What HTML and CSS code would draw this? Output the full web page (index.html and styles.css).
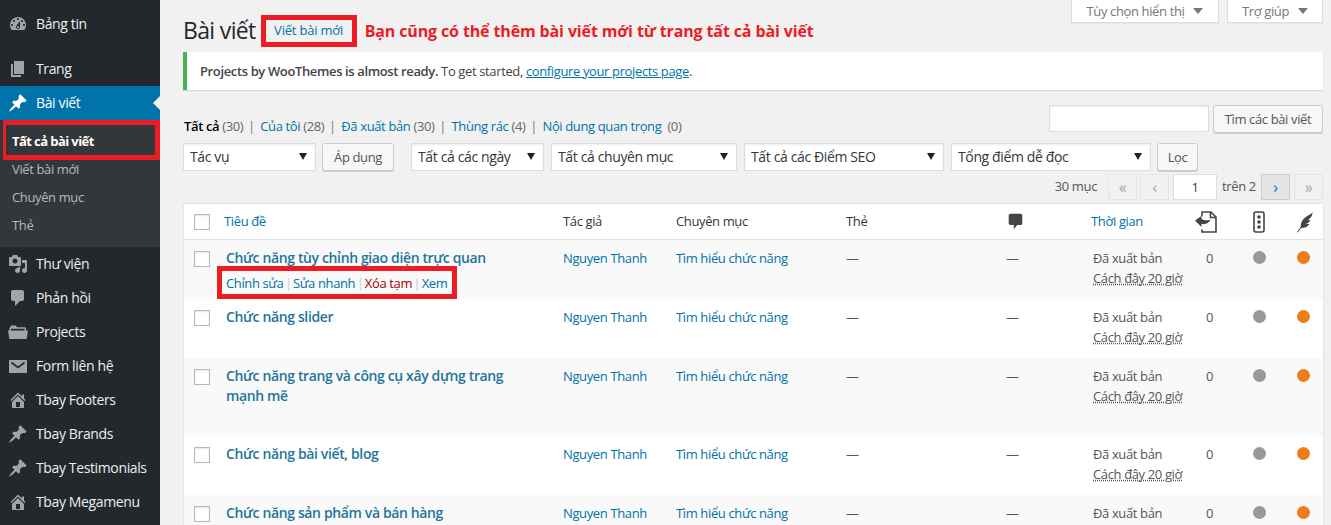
FILE: index.html
```html
<!DOCTYPE html>
<html lang="vi">
<head>
    <meta charset="UTF-8">
    <meta name="viewport" content="width=device-width, initial-scale=1.0">
    <title>Bài viết</title>
    <link rel="stylesheet" href="styles.css">
</head>
<body>
    <div class="wrap">
        <nav class="sidebar">
            <a class="menu-item menu-first" href="#">
                <svg class="menu-icon" viewBox="0 0 20 20"><path d="M3.76 16h12.48c1.1-1.37 1.76-3.11 1.76-5 0-4.42-3.58-8-8-8s-8 3.58-8 8c0 1.89.66 3.63 1.76 5zM10 4c.55 0 1 .45 1 1s-.45 1-1 1-1-.45-1-1 .45-1 1-1zM6 6c.55 0 1 .45 1 1s-.45 1-1 1-1-.45-1-1 .45-1 1-1zm8 0c.55 0 1 .45 1 1s-.45 1-1 1-1-.45-1-1 .45-1 1-1zm-5.37 5.55L12 7v6c0 1.1-.9 2-2 2s-2-.9-2-2c0-.57.24-1.08.63-1.45zM4 10c.55 0 1 .45 1 1s-.45 1-1 1-1-.45-1-1 .45-1 1-1zm12 0c.55 0 1 .45 1 1s-.45 1-1 1-1-.45-1-1 .45-1 1-1zm-5 3c0-.55-.45-1-1-1s-1 .45-1 1 .45 1 1 1 1-.45 1-1z"/></svg>
                Bảng tin
            </a>
            <a class="menu-item menu-sep" href="#">
                <svg class="menu-icon" viewBox="0 0 20 20"><path d="M6 15V2h10v13H6zm-1 1h8v2H3V5h2v11z"/></svg>
                Trang
            </a>
            <a class="menu-item active" href="#">
                <svg class="menu-icon" viewBox="0 0 20 20"><path d="M10.44 3.02l1.82-1.82 6.36 6.35-1.83 1.82c-1.05-.68-2.48-.57-3.41.36l-.75.75c-.92.93-1.04 2.35-.35 3.41l-1.83 1.82-2.41-2.41-2.8 2.79c-.42.42-3.38 2.71-3.8 2.29s1.86-3.39 2.28-3.81l2.79-2.79L4.1 9.36l1.83-1.82c1.05.69 2.48.57 3.4-.36l.75-.75c.93-.92 1.05-2.35.36-3.41z"/></svg>
                Bài viết
            </a>
            <div class="submenu">
                <a class="sub-item current" href="#">Tất cả bài viết</a>
                <a class="sub-item" href="#">Viết bài mới</a>
                <a class="sub-item" href="#">Chuyên mục</a>
                <a class="sub-item" href="#">Thẻ</a>
            </div>
            <a class="menu-item" href="#">
                <svg class="menu-icon" viewBox="0 0 20 20"><path d="M13 11V4c0-.55-.45-1-1-1h-1.67L9 1H5L3.67 3H2c-.55 0-1 .45-1 1v7c0 .55.45 1 1 1h10c.55 0 1-.45 1-1zM7 4.5c1.38 0 2.5 1.12 2.5 2.5S8.38 9.5 7 9.5 4.5 8.38 4.5 7 5.62 4.5 7 4.5zM14 6h5v10.5c0 1.38-1.12 2.5-2.5 2.5S14 17.88 14 16.5s1.12-2.5 2.5-2.5c.17 0 .34.02.5.05V9h-3V6zm-4 8.05V13h2v3.5c0 1.38-1.12 2.5-2.5 2.5S7 17.88 7 16.5 8.12 14 9.5 14c.17 0 .34.02.5.05z"/></svg>
                Thư viện
            </a>
            <a class="menu-item" href="#">
                <svg class="menu-icon" viewBox="0 0 20 20"><path d="M5 2h9c1.1 0 2 .9 2 2v7c0 1.1-.9 2-2 2h-2l-5 5v-5H5c-1.1 0-2-.9-2-2V4c0-1.1.9-2 2-2z"/></svg>
                Phản hồi
            </a>
            <a class="menu-item" href="#">
                <svg class="menu-icon" viewBox="0 0 20 20"><path d="M0 8.500h1.500V6c0-.5.4-.8.8-.8L3 3.500h5l1 1.700h8.200c.5 0 .8.3.8.8v2.500h2l-1.300 8.500H1.300z M3 8.500h13.500V6.700H3z"/></svg>
                Projects
            </a>
            <a class="menu-item" href="#">
                <svg class="menu-icon" viewBox="0 0 20 20"><rect x="1" y="4" width="18" height="13" rx=".5"/><path class="envelope-fold" d="M3.500 6.500l6.500 5 6.500-5"/></svg>
                Form liên hệ
            </a>
            <a class="menu-item" href="#">
                <svg class="menu-icon" viewBox="0 0 20 20"><path d="M16 8.500l1.530 1.530-1.060 1.060L10 4.620l-6.470 6.470-1.060-1.060L10 2.500l4 4v-2h2v4zm-6-2.460l6 5.990V18H4v-5.970zM12 17v-5H8v5h4z"/></svg>
                Tbay Footers
            </a>
            <a class="menu-item" href="#">
                <svg class="menu-icon" viewBox="0 0 20 20"><path d="M10.44 3.02l1.82-1.82 6.36 6.35-1.83 1.82c-1.05-.68-2.48-.57-3.41.36l-.75.75c-.92.93-1.04 2.35-.35 3.41l-1.83 1.82-2.41-2.41-2.8 2.79c-.42.42-3.38 2.71-3.8 2.29s1.86-3.39 2.28-3.81l2.79-2.79L4.1 9.36l1.83-1.82c1.05.69 2.48.57 3.4-.36l.75-.75c.93-.92 1.05-2.35.36-3.41z"/></svg>
                Tbay Brands
            </a>
            <a class="menu-item" href="#">
                <svg class="menu-icon" viewBox="0 0 20 20"><path d="M10.44 3.02l1.82-1.82 6.36 6.35-1.83 1.82c-1.05-.68-2.48-.57-3.41.36l-.75.75c-.92.93-1.04 2.35-.35 3.41l-1.83 1.82-2.41-2.41-2.8 2.79c-.42.42-3.38 2.71-3.8 2.29s1.86-3.39 2.28-3.81l2.79-2.79L4.1 9.36l1.83-1.82c1.05.69 2.48.57 3.4-.36l.75-.75c.93-.92 1.05-2.35.36-3.41z"/></svg>
                Tbay Testimonials
            </a>
            <a class="menu-item" href="#">
                <svg class="menu-icon" viewBox="0 0 20 20"><path d="M16 8.500l1.530 1.530-1.060 1.060L10 4.620l-6.470 6.470-1.060-1.060L10 2.500l4 4v-2h2v4zm-6-2.460l6 5.990V18H4v-5.970zM12 17v-5H8v5h4z"/></svg>
                Tbay Megamenu
            </a>
        </nav>

        <main class="content">
            <div class="top-row">
                <h1 class="page-title">Bài viết</h1>
                <a class="add-new" href="#">Viết bài mới</a>
                <span class="note">Bạn cũng có thể thêm bài viết mới từ trang tất cả bài viết</span>
                <div class="screen-tabs">
                    <button class="screen-tab tab-options">Tùy chọn hiển thị <i class="tab-arrow"></i></button>
                    <button class="screen-tab tab-help">Trợ giúp <i class="tab-arrow"></i></button>
                </div>
            </div>

            <div class="notice">
                <strong>Projects by WooThemes is almost ready.</strong> To get started, <a href="#">configure your projects page</a>.
            </div>

            <div class="search-row">
                <ul class="subsub">
                    <li><a class="current" href="#">Tất cả</a> (30)</li>
                    <li><a href="#">Của tôi</a> (28)</li>
                    <li><a href="#">Đã xuất bản</a> (30)</li>
                    <li><a href="#">Thùng rác</a> (4)</li>
                    <li><a href="#">Nội dung quan trọng</a> &nbsp;(0)</li>
                </ul>
                <div class="search-box">
                    <input class="search-input" type="search">
                    <button class="btn btn-search">Tìm các bài viết</button>
                </div>
            </div>

            <div class="filter-row">
                <label class="select sel-action"><select><option>Tác vụ</option></select></label>
                <button class="btn btn-apply">Áp dụng</button>
                <label class="select sel-date"><select><option>Tất cả các ngày</option></select></label>
                <label class="select sel-cat"><select><option>Tất cả chuyên mục</option></select></label>
                <label class="select sel-seo"><select><option>Tất cả các Điểm SEO</option></select></label>
                <label class="select sel-read"><select><option>Tổng điểm dễ đọc</option></select></label>
                <button class="btn btn-filter">Lọc</button>
            </div>

            <div class="pager">
                <span class="pager-count">30 mục</span>
                <span class="page-btn">«</span>
                <span class="page-btn">‹</span>
                <input class="page-input" type="text" value="1">
                <span class="pager-total">trên 2</span>
                <a class="page-btn page-next" href="#">›</a>
                <span class="page-btn">»</span>
            </div>

            <table class="posts">
                <colgroup>
                    <col class="c-cb"><col class="c-title"><col class="c-author"><col class="c-cat"><col class="c-tags">
                    <col class="c-comments"><col class="c-date"><col class="c-links"><col class="c-seo"><col class="c-read">
                </colgroup>
                <thead>
                    <tr>
                        <th class="cell-cb"><span class="checkbox"></span></th>
                        <th class="th-title"><a href="#">Tiêu đề</a></th>
                        <th>Tác giả</th>
                        <th>Chuyên mục</th>
                        <th>Thẻ</th>
                        <th class="th-icon-left">
                            <svg class="head-icon" viewBox="0 0 20 20"><path d="M4 1h12c1.100 0 2 .9 2 2v9c0 1.100-.9 2-2 2h-4l-4 5v-5H4c-1.100 0-2-.9-2-2V3c0-1.100.9-2 2-2z"/></svg>
                        </th>
                        <th class="th-date"><a href="#">Thời gian</a></th>
                        <th class="th-center th-links">
                            <svg class="head-icon wide" viewBox="0 0 22 22"><path class="outline" d="M7 5.500V1h9l5 5v15H7v-2.500M15.500 1v5.500H21"/><path d="M0 9.500l6.500-4.500v2.800c2 1.600 5.500 2.200 9 .7-1.500 3.500-5.500 5.500-9 4.300V16z"/></svg>
                        </th>
                        <th class="th-center">
                            <svg class="head-icon wide" viewBox="0 0 22 22"><rect class="outline" x="6" y="1" width="10" height="20" rx="2"/><circle cx="11" cy="6" r="1.800"/><circle cx="11" cy="11" r="1.800"/><circle cx="11" cy="16" r="1.800"/></svg>
                        </th>
                        <th class="th-center th-read">
                            <svg class="head-icon wide" viewBox="0 0 22 22"><path d="M19.500 1c-.8 2-3 2.500-6 4.500-3.200 2.100-5.500 5-5.700 8.500l-.1 2L4 21l.6.500 3.700-4.500c3.500.2 6.700-1.200 8.200-4.200-1.300.4-2.500.4-3.500.1 1.800-.6 3.600-2 4.400-3.900-.9.2-1.800.2-2.600 0 2.200-1.200 4.900-3.900 4.700-8z"/></svg>
                        </th>
                    </tr>
                </thead>
                <tbody>
                    <tr class="alt">
                        <td class="cell-cb"><span class="checkbox"></span></td>
                        <td>
                            <a class="row-title" href="#">Chức năng tùy chỉnh giao diện trực quan</a>
                            <div class="row-actions shown">
                                <a href="#">Chỉnh sửa</a> <i>|</i> <a href="#">Sửa nhanh</a> <i>|</i> <a class="trash" href="#">Xóa tạm</a> <i>|</i> <a href="#">Xem</a>
                            </div>
                        </td>
                        <td><a href="#">Nguyen Thanh</a></td>
                        <td><a href="#">Tìm hiểu chức năng</a></td>
                        <td>—</td>
                        <td>—</td>
                        <td class="td-date">Đã xuất bản<br><abbr>Cách đây 20 giờ</abbr></td>
                        <td class="td-count">0</td>
                        <td class="td-dot"><span class="dot gray"></span></td>
                        <td class="td-dot td-read"><span class="dot orange"></span></td>
                    </tr>
                    <tr>
                        <td class="cell-cb"><span class="checkbox"></span></td>
                        <td>
                            <a class="row-title" href="#">Chức năng slider</a>
                            <div class="row-actions">&nbsp;</div>
                        </td>
                        <td><a href="#">Nguyen Thanh</a></td>
                        <td><a href="#">Tìm hiểu chức năng</a></td>
                        <td>—</td>
                        <td>—</td>
                        <td class="td-date">Đã xuất bản<br><abbr>Cách đây 20 giờ</abbr></td>
                        <td class="td-count">0</td>
                        <td class="td-dot"><span class="dot gray"></span></td>
                        <td class="td-dot td-read"><span class="dot orange"></span></td>
                    </tr>
                    <tr class="alt">
                        <td class="cell-cb"><span class="checkbox"></span></td>
                        <td>
                            <a class="row-title" href="#">Chức năng trang và công cụ xây dựng trang mạnh mẽ</a>
                            <div class="row-actions">&nbsp;</div>
                        </td>
                        <td><a href="#">Nguyen Thanh</a></td>
                        <td><a href="#">Tìm hiểu chức năng</a></td>
                        <td>—</td>
                        <td>—</td>
                        <td class="td-date">Đã xuất bản<br><abbr>Cách đây 20 giờ</abbr></td>
                        <td class="td-count">0</td>
                        <td class="td-dot"><span class="dot gray"></span></td>
                        <td class="td-dot td-read"><span class="dot orange"></span></td>
                    </tr>
                    <tr>
                        <td class="cell-cb"><span class="checkbox"></span></td>
                        <td>
                            <a class="row-title" href="#">Chức năng bài viết, blog</a>
                            <div class="row-actions">&nbsp;</div>
                        </td>
                        <td><a href="#">Nguyen Thanh</a></td>
                        <td><a href="#">Tìm hiểu chức năng</a></td>
                        <td>—</td>
                        <td>—</td>
                        <td class="td-date">Đã xuất bản<br><abbr>Cách đây 20 giờ</abbr></td>
                        <td class="td-count">0</td>
                        <td class="td-dot"><span class="dot gray"></span></td>
                        <td class="td-dot td-read"><span class="dot orange"></span></td>
                    </tr>
                    <tr class="alt">
                        <td class="cell-cb"><span class="checkbox"></span></td>
                        <td>
                            <a class="row-title" href="#">Chức năng sản phẩm và bán hàng</a>
                            <div class="row-actions">&nbsp;</div>
                        </td>
                        <td><a href="#">Nguyen Thanh</a></td>
                        <td><a href="#">Tìm hiểu chức năng</a></td>
                        <td>—</td>
                        <td>—</td>
                        <td class="td-date">Đã xuất bản<br><abbr>Cách đây 20 giờ</abbr></td>
                        <td class="td-count">0</td>
                        <td class="td-dot"><span class="dot gray"></span></td>
                        <td class="td-dot td-read"><span class="dot orange"></span></td>
                    </tr>
                </tbody>
            </table>
        </main>
    </div>
</body>
</html>
```

FILE: styles.css
```css
html, body {
    height: 100%;
    margin: 0;
    overflow: hidden;
}
body {
    background: #f1f1f1;
    color: #444;
    font-family: "Open Sans", sans-serif;
    font-size: 13px;
    line-height: 19.5px;
    letter-spacing: -.37px;
}
button, input, select {
    letter-spacing: inherit;
}
a {
    color: #0073aa;
    text-decoration: none;
}
.wrap {
    display: flex;
    min-height: 100%;
}

/* sidebar */
.sidebar {
    flex: 0 0 160px;
    width: 160px;
    padding-top: 7px;
    background: #23282d;
}
.menu-item {
    display: flex;
    align-items: center;
    position: relative;
    height: 34px;
    padding-left: 8px;
    color: #eee;
    font-size: 14px;
}
.menu-icon {
    flex: 0 0 20px;
    width: 20px;
    height: 20px;
    margin-right: 8px;
    fill: #a0a5aa;
}
.envelope-fold {
    fill: none;
    stroke: #23282d;
    stroke-width: 1.6;
}
.menu-sep {
    margin-top: 11px;
}
.menu-item.active {
    background: #0073aa;
    color: #fff;
}
.menu-item.active .menu-icon {
    fill: #fff;
}
.menu-item.active::after {
    content: "";
    position: absolute;
    top: 10px;
    right: 0;
    border: 7px solid transparent;
    border-left: 0;
    border-right-color: #f1f1f1;
}
.submenu {
    padding: 7px 0 8px;
    background: #32373c;
}
.sub-item {
    display: block;
    height: 28px;
    padding-left: 12px;
    color: #b4b9be;
    line-height: 28px;
}
.sub-item.current {
    height: 30px;
    margin: -7px 0 -5px 3px;
    padding: 0 0 0 6px;
    border: 5px solid #ed1c24;
    border-left-width: 3px;
    color: #fff;
    font-weight: 700;
    line-height: 32px;
    letter-spacing: -.58px;
}

/* main column */
.content {
    flex: 1;
    min-width: 0;
    padding: 0 8px 0 23px;
}
.top-row {
    display: flex;
    align-items: flex-start;
    height: 47px;
}
.page-title {
    margin: 15px 0 0;
    color: #23282d;
    font-size: 23px;
    font-weight: 400;
    line-height: 30px;
    letter-spacing: -.65px;
}
.add-new {
    width: 96px;
    height: 32px;
    margin: 15px 0 0 5px;
    border: 5px solid #ed1c24;
    box-sizing: border-box;
    background: #f1f1f1;
    font-size: 13px;
    font-weight: 500;
    line-height: 21px;
    letter-spacing: -.2px;
    text-align: center;
    white-space: nowrap;
}
.note {
    margin: 19px 0 0 8px;
    color: #ed1c24;
    font-size: 16px;
    font-weight: 700;
    line-height: 24px;
    letter-spacing: -.13px;
    white-space: nowrap;
}
.screen-tabs {
    display: flex;
    gap: 8px;
    margin-left: auto;
}
.screen-tab {
    height: 23px;
    padding: 0;
    border: 1px solid #ddd;
    border-top: 0;
    background: #fff;
    color: #72777c;
    font: 13px/20px "Open Sans", sans-serif;
    box-shadow: 0 1px 1px rgba(0, 0, 0, .04);
}
.tab-options {
    width: 148px;
}
.tab-help {
    width: 96px;
}
.tab-arrow {
    display: inline-block;
    margin-left: 6px;
    vertical-align: 2px;
    border: 5px solid transparent;
    border-bottom: 0;
    border-top: 6px solid #72777c;
}
.notice {
    height: 38px;
    margin-top: 5px;
    padding-left: 13px;
    border-left: 4px solid #46b450;
    background: #fff;
    box-shadow: 0 1px 1px rgba(0, 0, 0, .1);
    box-sizing: border-box;
    line-height: 38px;
}
.notice strong {
    font-weight: 600;
}
.notice a {
    text-decoration: underline;
}
.search-row {
    display: flex;
    justify-content: space-between;
    align-items: flex-start;
    margin-top: 15px;
    height: 28px;
}
.subsub {
    display: flex;
    margin: 0;
    padding: 12px 0 0 1px;
    list-style: none;
    color: #666;
}
.subsub li + li::before {
    content: "|";
    margin: 0 5.5px 0 4.75px;
    color: #777;
}
.subsub .current {
    color: #000;
    font-weight: 600;
}
.search-box {
    display: flex;
    gap: 4px;
}
.search-input {
    width: 160px;
    height: 27px;
    padding: 0;
    border: 1px solid #ddd;
    box-sizing: border-box;
    background: #fff;
    box-shadow: inset 0 1px 2px rgba(0, 0, 0, .07);
}
.btn {
    height: 28px;
    padding: 0;
    border: 1px solid #ccc;
    border-radius: 3px;
    background: #f7f7f7;
    box-shadow: 0 1px 0 #ccc;
    color: #555;
    font: 13px/26px "Open Sans", sans-serif;
    white-space: nowrap;
}
.btn-search { width: 110px; }
.filter-row {
    display: flex;
    align-items: flex-start;
    gap: 7px;
    margin-top: 10px;
    height: 28px;
}
.select {
    position: relative;
    display: block;
}
.select::after {
    content: "";
    position: absolute;
    top: 10px;
    right: 9px;
    border: 4px solid transparent;
    border-bottom: 0;
    border-top: 7px solid #222;
    pointer-events: none;
}
.select select {
    display: block;
    width: 100%;
    height: 28px;
    padding: 0 6px 2px;
    border: 1px solid #ddd;
    background: #fff;
    box-shadow: inset 0 1px 2px rgba(0, 0, 0, .07);
    color: #32373c;
    font: 14px "Open Sans", sans-serif;
    appearance: none;
}
.sel-action { width: 133px; }
.sel-date { width: 133px; margin-left: 10px; }
.sel-cat { width: 186px; }
.sel-seo { width: 200px; }
.sel-read { width: 200px; }
.btn-apply { width: 72px; margin-left: -1px; padding-bottom: 2px; }
.btn-filter { width: 41px; margin-left: -1px; padding-bottom: 2px; }
.pager {
    display: flex;
    justify-content: flex-end;
    align-items: center;
    height: 26px;
    margin-top: 3px;
    color: #555;
}
.pager-count {
    margin-right: 8px;
}
.pager-total {
    flex: 0 0 36px;
    padding-left: 5px;
}
.page-btn {
    flex: 0 0 29px;
    height: 26px;
    margin-left: 3px;
    border: 1px solid #e5e5e5;
    box-sizing: border-box;
    background: #f1f1f1;
    color: #a0a5aa;
    font-size: 16px;
    line-height: 24px;
    text-align: center;
}
.page-next {
    margin-right: 1px;
    border-color: #ccc;
    background: #e5e5e5;
    color: #0073aa;
}
.page-input {
    width: 44px;
    height: 26px;
    margin-left: 4px;
    padding: 0;
    border: 1px solid #ddd;
    box-sizing: border-box;
    background: #fff;
    color: #32373c;
    font: 13px "Open Sans", sans-serif;
    text-align: center;
}

/* posts table */
.posts {
    width: 1140px;
    margin-top: 3px;
    border: 1px solid #e5e5e5;
    border-collapse: separate;
    border-spacing: 0;
    table-layout: fixed;
    background: #fff;
    box-shadow: 0 1px 1px rgba(0, 0, 0, .04);
}
.c-cb { width: 32px; }
.c-title { width: 337px; }
.c-author { width: 113px; }
.c-cat { width: 170px; }
.c-tags { width: 160px; }
.c-comments { width: 87px; }
.c-date { width: 103px; }
.c-links { width: 50px; }
.c-seo { width: 46px; }
.c-read { width: 41px; }
.posts th {
    height: 36px;
    padding: 0 10px;
    border-bottom: 1px solid #e1e1e1;
    box-sizing: border-box;
    color: #32373c;
    font-weight: 400;
    text-align: left;
}
.posts td {
    padding: 9px 10px 11px;
    vertical-align: top;
    color: #555;
}
.posts .cell-cb {
    padding: 0 0 0 10px;
}
.posts td.cell-cb {
    padding-top: 11px;
}
.posts .alt td {
    background: #f9f9f9;
}
.checkbox {
    display: block;
    width: 16px;
    height: 16px;
    border: 1px solid #b4b9be;
    box-sizing: border-box;
    background: #fff;
    box-shadow: inset 0 1px 2px rgba(0, 0, 0, .1);
}
.posts .th-title {
    padding-left: 8px;
}
.posts .th-date {
    padding-left: 8px;
}
.posts .th-center {
    padding: 0;
    text-align: center;
}
.posts .th-links {
    padding-right: 10px;
}
.posts .th-read {
    padding-left: 2px;
}
.posts .th-icon-left {
    padding-left: 11px;
}
.head-icon {
    display: block;
    width: 17px;
    height: 17px;
    fill: #444;
}
.head-icon.wide {
    width: 22px;
    height: 22px;
    margin: 0 auto;
}
.head-icon .outline {
    fill: none;
    stroke: #444;
    stroke-width: 1.6;
}
.row-title {
    display: block;
    margin: -1px 0 .5px;
    color: #21759b;
    font-size: 14px;
    font-weight: 600;
}
.row-actions {
    visibility: hidden;
}
.row-actions.shown {
    width: fit-content;
    height: 23px;
    margin: 3px 0 -7px -4px;
    padding: 0 5px 0 4px;
    outline: 5px solid #ed1c24;
    line-height: 24px;
    white-space: nowrap;
    visibility: visible;
}
.row-actions i {
    margin: 0 -1.6px;
    color: #ccc;
    font-style: normal;
}
.row-actions .trash {
    color: #a00;
}
abbr {
    text-decoration: underline dotted;
}
.td-date {
    white-space: nowrap;
}
.posts td.td-count {
    padding-left: 20px;
}
.posts td.td-dot {
    padding: 11px 0 0;
    text-align: center;
}
.posts td.td-read {
    padding-left: 2px;
}
.dot {
    display: inline-block;
    width: 13px;
    height: 13px;
    border-radius: 50%;
    vertical-align: top;
}
.gray { background: #999; }
.orange { background: #ee7c1b; }
```
